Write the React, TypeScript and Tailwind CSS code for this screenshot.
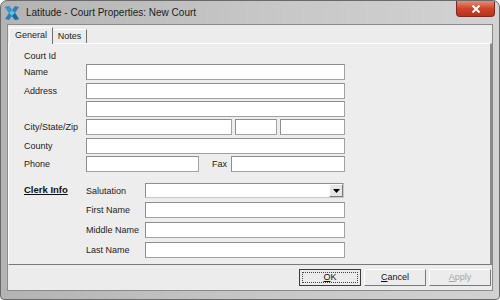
import React from "react";

const font = { fontFamily: '"Liberation Sans", Arial, sans-serif' };

function Field({ w, h = 16 }: { w: number; h?: number }) {
  return (
    <div
      className="bg-white border border-[#a2a2a2] border-t-[#8e8e8e] border-l-[#8e8e8e]"
      style={{ width: w, height: h }}
    />
  );
}

function Label({ children, w }: { children: React.ReactNode; w: number }) {
  return (
    <div className="shrink-0 text-[9px] leading-[12px] text-[#1b1b1b]" style={{ width: w }}>
      {children}
    </div>
  );
}

function AppIcon() {
  return (
    <svg width="16" height="16" viewBox="0 0 16 16">
      <path d="M1 2 L5 1 L8 5 L11 1 L15 2 L11 8 L15 14 L11 15 L8 11 L5 15 L1 14 L5 8 Z" fill="#2e7fb8" />
      <path d="M5 8 L8 5 L11 8 L8 11 Z" fill="#5cc0e0" />
      <path d="M1 2 L5 1 L8 5 L5 8 Z" fill="#3b95cc" />
      <path d="M11 8 L15 14 L11 15 L8 11 Z" fill="#1f6aa3" />
    </svg>
  );
}

function Button({
  children,
  primary,
  disabled,
}: {
  children: React.ReactNode;
  primary?: boolean;
  disabled?: boolean;
}) {
  return (
    <div
      className={
        "relative w-[62px] h-[17px] flex items-center justify-center text-[9px] bg-[#ececec] " +
        (primary
          ? "border border-[#3a3a3a]"
          : "border border-white border-r-[#7a7a7a] border-b-[#7a7a7a]") +
        (disabled ? " text-[#a7a7a7]" : " text-[#111]")
      }
    >
      {primary && (
        <div className="absolute inset-[2px] border border-dotted border-[#444]" />
      )}
      <span className="relative">{children}</span>
    </div>
  );
}

export default function App() {
  return (
    <div
      className="w-[500px] h-[300px] flex flex-col border border-[#6a6a6a] rounded-t-[7px] rounded-b-[4px] overflow-hidden bg-gradient-to-r from-[#b3b3b3] via-[#c6c6c6] to-[#d2d2d2]"
      style={font}
    >
      {/* title bar */}
      <div className="h-[23px] shrink-0 flex items-start">
        <div className="ml-[3px] mt-[4px]">
          <AppIcon />
        </div>
        <div className="ml-[6px] mt-[5px] text-[10px] leading-[13px] text-[#1c1c1c]">
          Latitude - Court Properties: New Court
        </div>
        <div className="ml-auto mr-[4px] w-[39px] h-[16px] rounded-b-[4px] border border-t-0 border-[#7a2a22] bg-gradient-to-b from-[#e58a78] via-[#d0432a] to-[#b8321c] flex items-center justify-center">
          <svg width="10" height="8" viewBox="0 0 10 8">
            <path d="M1.5 0.5 L8.5 7.5 M8.5 0.5 L1.5 7.5" stroke="#fff" strokeWidth="2" />
          </svg>
        </div>
      </div>

      {/* client area */}
      <div className="mx-[6px] h-[267px] shrink-0 flex flex-col bg-[#ececec] border border-[#8a8a8a]">
        {/* tabs */}
        <div className="h-[18px] shrink-0 flex items-end pl-[1px] text-[9px] text-[#1b1b1b]">
          <div className="relative z-10 h-[17px] -mb-px w-[44px] bg-[#ededed] border-l border-t border-white border-r border-r-[#6f6f6f] flex items-center justify-center">
            General
          </div>
          <div className="h-[14px] w-[34px] bg-[#ececec] border-t border-white border-r border-r-[#6f6f6f] flex items-center justify-center">
            Notes
          </div>
        </div>

        {/* tab page */}
        <div className="h-[222px] shrink-0 flex flex-col bg-[#ededed] border-t border-l border-white border-r-2 border-b border-r-[#8a8a8a] border-b-[#7a7a7a] pl-[15px]">
          <div className="mt-[6px] h-[12px]">
            <Label w={62}>Court Id</Label>
          </div>

          <div className="mt-[2px] flex items-center">
            <Label w={62}>Name</Label>
            <Field w={259} />
          </div>
          <div className="mt-[3px] flex items-center">
            <Label w={62}>Address</Label>
            <Field w={259} />
          </div>
          <div className="mt-[2px] flex items-center">
            <Label w={62}></Label>
            <Field w={259} />
          </div>
          <div className="mt-[2px] flex items-center">
            <Label w={62}>City/State/Zip</Label>
            <div className="flex gap-[3px]">
              <Field w={146} />
              <Field w={42} />
              <Field w={65} />
            </div>
          </div>
          <div className="mt-[3px] flex items-center">
            <Label w={62}>County</Label>
            <Field w={259} />
          </div>
          <div className="mt-[2px] flex items-center">
            <Label w={62}>Phone</Label>
            <Field w={113} />
            <div className="ml-[13px]">
              <Label w={19}>Fax</Label>
            </div>
            <Field w={114} />
          </div>

          {/* clerk info */}
          <div className="mt-[11px] flex">
            <div className="w-[62px] h-[15px] flex items-center text-[9.5px] font-bold underline text-[#111]">
              Clerk Info
            </div>
            <div className="flex flex-col gap-[4px]">
              <div className="flex items-center">
                <Label w={59}>Salutation</Label>
                <div className="w-[199px] h-[15px] bg-white border border-[#8e8e8e] border-r-[#c8c8c8] border-b-[#c8c8c8] flex justify-end">
                  <div className="w-[14px] h-full bg-[#e6e6e6] border border-white border-r-[#7a7a7a] border-b-[#7a7a7a] flex items-center justify-center">
                    <svg width="7" height="4" viewBox="0 0 7 4">
                      <path d="M0 0 H7 L3.5 4 Z" fill="#000" />
                    </svg>
                  </div>
                </div>
              </div>
              <div className="flex items-center">
                <Label w={59}>First Name</Label>
                <Field w={200} />
              </div>
              <div className="flex items-center">
                <Label w={59}>Middle Name</Label>
                <Field w={200} />
              </div>
              <div className="flex items-center">
                <Label w={59}>Last Name</Label>
                <Field w={200} />
              </div>
            </div>
          </div>
        </div>

        {/* buttons */}
        <div className="mt-[4px] flex justify-end gap-[3px] pr-[1px]">
          <Button primary>
            <span className="underline">O</span>K
          </Button>
          <Button>
            <span className="underline">C</span>ancel
          </Button>
          <Button disabled>
            <span className="underline">A</span>pply
          </Button>
        </div>
      </div>
    </div>
  );
}
